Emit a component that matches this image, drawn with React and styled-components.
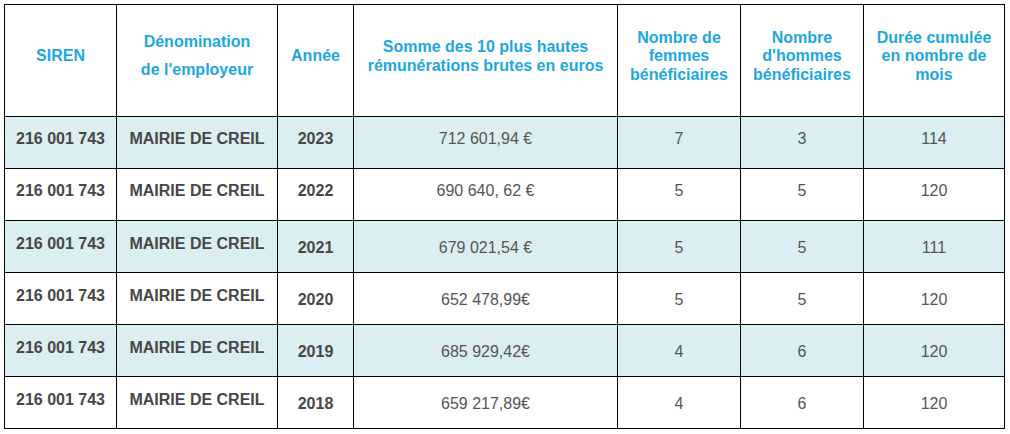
import styled, { createGlobalStyle } from "styled-components";

const GlobalStyle = createGlobalStyle`
  body {
    margin: 0;
    padding: 4px;
    background: #fff;
    font-family: "Liberation Sans", Arial, sans-serif;
  }
`;

const Table = styled.table`
  border-collapse: collapse;
  table-layout: fixed;
  width: 1001px;
  font-size: 16px;
`;

const HeadCell = styled.th`
  border: 1px solid #000;
  height: 103px;
  padding: 0 6px 8px;
  color: #1ca7e0;
  font-weight: bold;
  text-align: center;
  vertical-align: middle;
  line-height: 18.5px;
`;

const HeadLine = styled.span`
  display: block;
  margin-top: ${(p) => (p.$gap ? "9.5px" : "0")};
`;

const Row = styled.tr`
  background: ${(p) => (p.$striped ? "#dbeef1" : "#fff")};
`;

const Cell = styled.td`
  border: 1px solid #000;
  height: 52px;
  padding: ${(p) => (p.$shift < 0 ? `0 4px ${-p.$shift * 2}px` : `${p.$shift * 2}px 4px 0`)};
  box-sizing: border-box;
  text-align: center;
  vertical-align: middle;
  color: ${(p) => (p.$bold ? "#474747" : "#555")};
  font-weight: ${(p) => (p.$bold ? "bold" : "normal")};
`;

const widths = [112, 161, 76, 264, 123, 123, 141];

const headers = [
  ["SIREN"],
  ["Dénomination", "de l'employeur"],
  ["Année"],
  ["Somme des 10 plus hautes", "rémunérations brutes en euros"],
  ["Nombre de", "femmes", "bénéficiaires"],
  ["Nombre", "d'hommes", "bénéficiaires"],
  ["Durée cumulée", "en nombre de", "mois"],
];

const rows = [
  ["2023", "712 601,94 €", "7", "3", "114"],
  ["2022", "690 640, 62 €", "5", "5", "120"],
  ["2021", "679 021,54 €", "5", "5", "111"],
  ["2020", "652 478,99€", "5", "5", "120"],
  ["2019", "685 929,42€", "4", "6", "120"],
  ["2018", "659 217,89€", "4", "6", "120"],
];

export default function App() {
  return (
    <>
      <GlobalStyle />
      <Table>
        <colgroup>
          {widths.map((w, i) => (
            <col key={i} style={{ width: w }} />
          ))}
        </colgroup>
        <thead>
          <tr>
            {headers.map((lines, i) => (
              <HeadCell key={i}>
                {lines.map((l, j) => (
                  <HeadLine key={j} $gap={i === 1 && j > 0}>
                    {l}
                  </HeadLine>
                ))}
              </HeadCell>
            ))}
          </tr>
        </thead>
        <tbody>
          {rows.map((r, i) => {
            const late = i >= 2;
            return (
              <Row key={r[0]} $striped={i % 2 === 0}>
                <Cell $bold $shift={late ? -3 : -4}>216 001 743</Cell>
                <Cell $bold $shift={late ? -3 : -4}>MAIRIE DE CREIL</Cell>
                <Cell $bold $shift={late ? 1 : -4}>{r[0]}</Cell>
                {r.slice(1).map((v, j) => (
                  <Cell key={j} $shift={late ? 1 : -4}>
                    {v}
                  </Cell>
                ))}
              </Row>
            );
          })}
        </tbody>
      </Table>
    </>
  );
}
